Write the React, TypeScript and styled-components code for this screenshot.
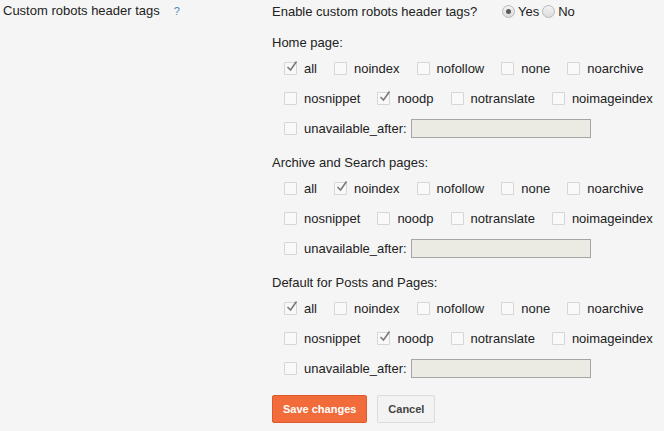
import styled, { createGlobalStyle } from "styled-components";

const GlobalStyle = createGlobalStyle`
  html, body {
    margin: 0;
    padding: 0;
    background: #f5f5f5;
  }
  body {
    font-family: "Liberation Sans", Arial, sans-serif;
    font-size: 13px;
    color: #222;
  }
`;

const Page = styled.div`
  display: flex;
  align-items: flex-start;
  width: 664px;
  height: 431px;
  background: #f5f5f5;
`;

const SideLabel = styled.div`
  width: 269px;
  padding-left: 3px;
  display: flex;
  align-items: center;
  height: 20px;
  gap: 14px;
`;

const Help = styled.span`
  color: #4a8bb5;
  font-size: 11px;
  padding-top: 1px;
`;

const Main = styled.div`
  display: flex;
  flex-direction: column;
  flex: 1;
`;

const EnableRow = styled.div`
  display: flex;
  align-items: center;
  height: 23px;
`;

const Question = styled.span`
  width: 230px;
`;

const RadioDot = styled.span<{ on?: boolean }>`
  width: 11px;
  height: 11px;
  border-radius: 50%;
  border: 1px solid #b9b9b9;
  background: linear-gradient(#f2f2f2, #dcdcdc);
  display: inline-flex;
  align-items: center;
  justify-content: center;
  margin-right: 3px;
  &::after {
    content: "";
    width: 5px;
    height: 5px;
    border-radius: 50%;
    background: ${(p) => (p.on ? "#5a5a5a" : "transparent")};
  }
`;

const RadioLabel = styled.span`
  margin-right: 3px;
`;

const Section = styled.div`
  margin-top: 10px;
`;

const SectionTitle = styled.div`
  height: 20px;
  line-height: 20px;
`;

const Row = styled.div`
  display: flex;
  align-items: center;
  height: 30px;
  padding-left: 12px;
  gap: 17px;
`;

const Item = styled.label`
  display: flex;
  align-items: center;
  gap: 7px;
`;

const Box = styled.span`
  position: relative;
  width: 11px;
  height: 11px;
  border: 1px solid #d6d6d6;
  background: #f9f9f9;
  border-radius: 1px;
  flex-shrink: 0;
`;

const Tick = styled.svg`
  position: absolute;
  left: 1px;
  top: -3px;
`;

const DateInput = styled.span`
  width: 178px;
  height: 17px;
  border: 1px solid #a6a6a6;
  background: #ebebe4;
  margin-left: -13px;
`;

const Buttons = styled.div`
  display: flex;
  gap: 10px;
  margin-top: 12px;
`;

const Button = styled.button<{ primary?: boolean }>`
  height: 28px;
  padding: 0 ${(p) => (p.primary ? "10px" : "8px")};
  min-width: ${(p) => (p.primary ? "94px" : "58px")};
  font-family: "Liberation Sans", Arial, sans-serif;
  font-size: 11px;
  font-weight: bold;
  border-radius: 2px;
  border: 1px solid ${(p) => (p.primary ? "#e0592d" : "#dcdcdc")};
  background: ${(p) => (p.primary ? "#f26b3a" : "#f3f3f3")};
  color: ${(p) => (p.primary ? "#fff" : "#444")};
`;

function Check({ label, on }: { label: string; on?: boolean }) {
  return (
    <Item>
      <Box>
        {on && (
          <Tick width="12" height="12" viewBox="0 0 12 12">
            <path d="M1.5 7 L4.5 10 L10.5 1.5" fill="none" stroke="#7a7a7a" strokeWidth="1.6" />
          </Tick>
        )}
      </Box>
      {label}
    </Item>
  );
}

const rowA = ["all", "noindex", "nofollow", "none", "noarchive"];
const rowB = ["nosnippet", "noodp", "notranslate", "noimageindex"];

const sections = [
  { title: "Home page:", on: ["all", "noodp"] },
  { title: "Archive and Search pages:", on: ["noindex"] },
  { title: "Default for Posts and Pages:", on: ["all", "noodp"] },
];

export default function App() {
  return (
    <Page>
      <GlobalStyle />
      <SideLabel>
        Custom robots header tags
        <Help>?</Help>
      </SideLabel>
      <Main>
        <EnableRow>
          <Question>Enable custom robots header tags?</Question>
          <RadioDot on />
          <RadioLabel>Yes</RadioLabel>
          <RadioDot />
          <RadioLabel>No</RadioLabel>
        </EnableRow>
        {sections.map((s) => (
          <Section key={s.title}>
            <SectionTitle>{s.title}</SectionTitle>
            <Row>
              {rowA.map((t) => (
                <Check key={t} label={t} on={s.on.includes(t)} />
              ))}
            </Row>
            <Row>
              {rowB.map((t) => (
                <Check key={t} label={t} on={s.on.includes(t)} />
              ))}
            </Row>
            <Row>
              <Check label="unavailable_after:" />
              <DateInput />
            </Row>
          </Section>
        ))}
        <Buttons>
          <Button primary>Save changes</Button>
          <Button>Cancel</Button>
        </Buttons>
      </Main>
    </Page>
  );
}
